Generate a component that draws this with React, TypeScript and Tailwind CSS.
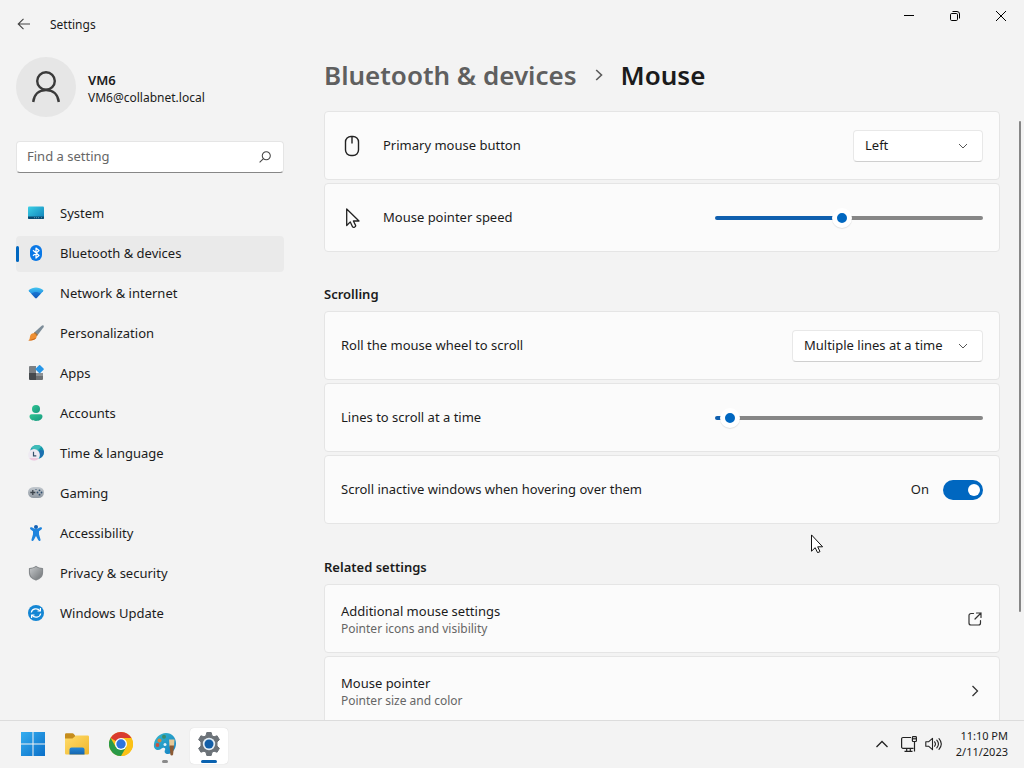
import { useState, type CSSProperties, type ReactNode } from 'react';

const glyph = 'size-4 shrink-0';

function SystemIcon() {
  return (
    <svg viewBox="0 0 16 16" className={glyph} aria-hidden="true">
      <defs>
        <linearGradient id="sys" x1="0" y1="0" x2="1" y2="1">
          <stop offset="0" stopColor="#3bd0e6" />
          <stop offset="1" stopColor="#0e7fb8" />
        </linearGradient>
      </defs>
      <rect x="0" y="1.5" width="16" height="12.5" rx="1" fill="url(#sys)" />
      <path d="M0 11.500h16V13a1 1 0 0 1-1 1H1a1 1 0 0 1-1-1z" fill="#0a4a70" />
      <path d="M6 12.700h1M8 12.700h1M10 12.700h1M13 12.700h1" stroke="#8fd0e8" strokeWidth=".6" />
    </svg>
  );
}

function BluetoothIcon() {
  return (
    <svg viewBox="0 0 16 16" className={glyph} aria-hidden="true">
      <rect x="2" y="0" width="12" height="16" rx="6" fill="#0a78e6" />
      <path d="M5 5.200l6 5.300L8 13V3l3 2.500-6 5.300" fill="none" stroke="#fff" strokeWidth="1.200" strokeLinejoin="round" />
    </svg>
  );
}

function NetworkIcon() {
  return (
    <svg viewBox="0 0 16 16" className={glyph} aria-hidden="true">
      <defs>
        <linearGradient id="net" x1="0" y1="0" x2="0" y2="1">
          <stop offset="0" stopColor="#45c6f0" />
          <stop offset=".45" stopColor="#2a9ce6" />
          <stop offset="1" stopColor="#0b4aa8" />
        </linearGradient>
      </defs>
      <path d="M.9 5C4.800 1.600 11.200 1.600 15.100 5a.9.900 0 0 1 0 1.200L8.700 13a1 1 0 0 1-1.400 0L.9 6.200A.9.900 0 0 1 .9 5z" fill="url(#net)" />
      <path d="M3.400 8.800C6.200 6.500 9.800 6.500 12.600 8.800L8.700 13a1 1 0 0 1-1.400 0z" fill="#1261c4" opacity=".65" />
    </svg>
  );
}

function BrushIcon() {
  return (
    <svg viewBox="0 0 16 16" className={glyph} aria-hidden="true">
      <path d="M15.500.5c.5.500.4 1.200 0 1.800L9.300 10.500 6.200 7.600 13.700.7c.6-.5 1.300-.7 1.800-.2z" fill="#7c8c98" />
      <path d="M6.900 7l3 2.800-1.300 1.600-3.200-3z" fill="#a8743c" />
      <path d="M5.400 8.300c1.700.1 3.300 1.600 3.200 3.200-.2 2.800-3.200 4.400-8.300 3.900C2.300 14 1.500 12.500 2.200 10.700c.5-1.500 1.700-2.500 3.200-2.400z" fill="#ee8f33" />
      <path d="M.3 15.400c3.700.3 6.800-.6 7.900-2.700-2.500 1-5 1.900-7.900 2.700z" fill="#c8661a" />
    </svg>
  );
}

function AppsIcon() {
  return (
    <svg viewBox="0 0 16 16" className={glyph} aria-hidden="true">
      <path d="M1 2a1 1 0 0 1 1-1h6v7H1z" fill="#7b7f83" />
      <path d="M1 8h7v7H2a1 1 0 0 1-1-1z" fill="#45494d" />
      <path d="M8 8h7v6a1 1 0 0 1-1 1H8z" fill="#6c7073" />
      <path d="M8 8h7v3H8z" fill="#8d9194" />
      <rect x="8.500" y="1" width="6.300" height="6.300" rx=".8" transform="rotate(45 11.650 4.150)" fill="#2596e8" />
    </svg>
  );
}

function AccountsIcon() {
  return (
    <svg viewBox="0 0 16 16" className={glyph} aria-hidden="true">
      <defs>
        <linearGradient id="acc" x1="0" y1="0" x2="1" y2="1">
          <stop offset="0" stopColor="#2fc592" />
          <stop offset="1" stopColor="#17977f" />
        </linearGradient>
      </defs>
      <circle cx="8" cy="4" r="4" fill="url(#acc)" />
      <path d="M3.500 9.300h9a2 2 0 0 1 2 2c0 3-3 4.700-6.500 4.700s-6.500-1.700-6.500-4.700a2 2 0 0 1 2-2z" fill="url(#acc)" />
    </svg>
  );
}

function TimeIcon() {
  return (
    <svg viewBox="0 0 16 16" className={glyph} aria-hidden="true">
      <circle cx="9" cy="7" r="7" fill="#1597ab" />
      <path d="M3.500 2.700C6-.5 11-.8 13.500 1.800L10 5H6z" fill="#3fbcb8" />
      <path d="M12 5l3.800.5c.5 3-1 6-3.500 7.600L10 9z" fill="#1c6fb0" />
      <circle cx="6" cy="10" r="5.900" fill="#eeeaf2" />
      <path d="M1.200 13a5.900 5.900 0 0 0 9.700 0z" fill="#efc7dc" />
      <path d="M5.500 6.800v4h2.800" fill="none" stroke="#35506b" strokeWidth="1.200" />
    </svg>
  );
}

function GamingIcon() {
  return (
    <svg viewBox="0 0 16 16" className={glyph} aria-hidden="true">
      <defs>
        <linearGradient id="gam" x1="0" y1="0" x2="0" y2="1">
          <stop offset="0" stopColor="#c3c9cf" />
          <stop offset="1" stopColor="#8f98a1" />
        </linearGradient>
      </defs>
      <rect x="0" y="2" width="16" height="11" rx="5.500" fill="url(#gam)" />
      <path d="M4.800 5v5M2.300 7.500h5" stroke="#3c444c" strokeWidth="1.300" />
      <g fill="#2f4d6c">
        <circle cx="11.500" cy="5.300" r=".9" />
        <circle cx="11.500" cy="9.700" r=".9" />
        <circle cx="9.500" cy="7.500" r=".9" />
        <circle cx="13.500" cy="7.500" r=".9" />
        <circle cx="8" cy="4.500" r=".6" />
      </g>
    </svg>
  );
}

function AccessibilityIcon() {
  return (
    <svg viewBox="0 0 16 16" className={glyph} aria-hidden="true">
      <circle cx="8" cy="2" r="2" fill="#1460b4" />
      <path d="M2.300 2.500c.5-.5 1.300-.4 2 .1C6.500 4.500 9.500 4.500 11.700 2.600c.7-.5 1.500-.6 2-.1.500.6.400 1.400-.3 1.900L11 6.300v3l1.500 5.200c.2.800-.2 1.400-.8 1.500-.7.100-1.200-.2-1.500-.9L8 11l-2.200 4.100c-.3.700-.8 1-1.500.9-.6-.1-1-.7-.8-1.500L5 9.300v-3L2.600 4.400c-.7-.5-.8-1.300-.3-1.900z" fill="#1e84de" />
    </svg>
  );
}

function ShieldIcon() {
  return (
    <svg viewBox="0 0 16 16" className={glyph} aria-hidden="true">
      <defs>
        <linearGradient id="shi" x1="0" y1="0" x2="1" y2="1">
          <stop offset="0" stopColor="#c4c7c9" />
          <stop offset="1" stopColor="#707477" />
        </linearGradient>
      </defs>
      <path d="M8 .8c2 1.500 4.300 2.100 6.600 2.200.3 0 .5.200.5.500v4c0 4-2.600 6.500-6.800 7.900a1 1 0 0 1-.6 0C3.500 14 .9 11.500.9 7.500v-4c0-.3.200-.5.500-.5C3.700 2.900 6 2.300 8 .8z" fill="#85898c" />
      <path d="M8 2c1.800 1.200 3.900 1.800 6 2v3.500c0 3.500-2.200 5.600-6 6.900-3.800-1.300-6-3.400-6-6.900V4c2.100-.2 4.200-.8 6-2z" fill="url(#shi)" />
    </svg>
  );
}

function UpdateIcon() {
  return (
    <svg viewBox="0 0 16 16" className={glyph} aria-hidden="true">
      <circle cx="8" cy="8" r="8" fill="#1486d4" />
      <g fill="none" stroke="#fff" strokeWidth="1.200">
        <path d="M3.300 7.500C4 3.500 9.500 2.500 12 5.800M12.700 8.500C12 12.500 6.500 13.500 4 10.200" />
        <path d="M12.400 3v3H9.500M3.600 13v-3h2.900" />
      </g>
    </svg>
  );
}

const navItems: { label: string; icon: ReactNode; active?: boolean }[] = [
  { label: 'System', icon: <SystemIcon /> },
  { label: 'Bluetooth & devices', icon: <BluetoothIcon />, active: true },
  { label: 'Network & internet', icon: <NetworkIcon /> },
  { label: 'Personalization', icon: <BrushIcon /> },
  { label: 'Apps', icon: <AppsIcon /> },
  { label: 'Accounts', icon: <AccountsIcon /> },
  { label: 'Time & language', icon: <TimeIcon /> },
  { label: 'Gaming', icon: <GamingIcon /> },
  { label: 'Accessibility', icon: <AccessibilityIcon /> },
  { label: 'Privacy & security', icon: <ShieldIcon /> },
  { label: 'Windows Update', icon: <UpdateIcon /> },
];

function TitleBar() {
  const button = 'flex h-8 w-[46px] items-center justify-center hover:bg-black/5';
  return (
    <header className="flex h-12 shrink-0 items-start justify-between">
      <div className="flex h-12 items-center gap-4 pl-4 text-xs">
        <button type="button" aria-label="Back" className="flex size-4 items-center justify-center">
          <svg viewBox="0 0 16 16" className="size-4" fill="none" stroke="#444" strokeWidth="1.100" aria-hidden="true">
            <path d="M14 8H2.300M7.500 2.800L2.200 8l5.300 5.200" />
          </svg>
        </button>
        <span className="pt-0.5 pl-0.5">Settings</span>
      </div>
      <div className="flex">
        <button type="button" aria-label="Minimize" className={button}>
          <svg viewBox="0 0 10 10" className="size-2.5" stroke="#000" fill="none" aria-hidden="true">
            <path d="M0 4.500h10" />
          </svg>
        </button>
        <button type="button" aria-label="Restore" className={button}>
          <svg viewBox="0 0 10 10" className="size-2.5" stroke="#000" fill="none" aria-hidden="true">
            <rect x=".5" y="2.500" width="7" height="7" rx="1.200" />
            <path d="M2.500.5H7A2.500 2.500 0 0 1 9.500 3v4.500" />
          </svg>
        </button>
        <button type="button" aria-label="Close" className={button}>
          <svg viewBox="0 0 10 10" className="size-2.5" stroke="#000" fill="none" aria-hidden="true">
            <path d="M0 0l10 10M10 0L0 10" />
          </svg>
        </button>
      </div>
    </header>
  );
}

function Sidebar() {
  return (
    <aside className="flex w-[300px] shrink-0 flex-col px-4 pt-[9px]">
      <div className="flex items-center gap-3">
        <div className="flex size-[60px] items-center justify-center rounded-full bg-[#e6e6e6]">
          <svg viewBox="0 0 28 32" className="h-8 w-7" fill="none" stroke="#3a3a3a" strokeWidth="2.400" aria-hidden="true">
            <circle cx="14" cy="10" r="8.800" />
            <path d="M1.200 31C2 23.500 7 19 14 19s12 4.500 12.800 12" />
          </svg>
        </div>
        <div className="pt-1">
          <p className="text-[13px] leading-[18px] font-semibold">VM6</p>
          <p className="text-xs leading-[18px]">VM6@collabnet.local</p>
        </div>
      </div>
      <label className="mt-6 flex h-8 items-center rounded border border-[#e5e5e5] border-b-[#868686] bg-white px-2.5">
        <input
          type="text"
          aria-label="Find a setting"
          placeholder="Find a setting"
          className="min-w-0 flex-1 bg-transparent text-[13px] outline-none placeholder:text-[#666]"
        />
        <svg viewBox="0 0 14 14" className="mr-0.5 size-3" fill="none" stroke="#444" strokeWidth="1.200" aria-hidden="true">
          <circle cx="8.500" cy="5.500" r="4.700" />
          <path d="M5.200 8.800L.7 13.300" />
        </svg>
      </label>
      <nav aria-label="Settings" className="mt-[23px] flex flex-col gap-1">
        {navItems.map((item) => (
          <a
            key={item.label}
            href="#"
            aria-current={item.active ? 'page' : undefined}
            className={
              item.active
                ? 'flex h-9 items-center rounded bg-[#eaeaea] text-[13px]'
                : 'flex h-9 items-center rounded text-[13px] hover:bg-[#eaeaea]'
            }
          >
            <span className={item.active ? 'h-4 w-[3px] rounded-full bg-[#0067c0]' : 'h-4 w-[3px]'} />
            <span className="flex w-[41px] items-center pb-0.5 pl-[9px]">{item.icon}</span>
            {item.label}
          </a>
        ))}
      </nav>
    </aside>
  );
}

function Card({ children }: { children: ReactNode }) {
  return (
    <div className="flex min-h-[69px] items-center justify-between gap-4 rounded border border-[#e5e5e5] bg-[#fbfbfb] px-4 py-2">
      {children}
    </div>
  );
}

function Dropdown({ id, options, wide }: { id: string; options: string[]; wide?: boolean }) {
  return (
    <span className={wide ? 'relative w-[191px]' : 'relative w-[130px]'}>
      <select
        id={id}
        className="block h-8 w-full appearance-none rounded border border-[#e8e8e8] border-b-[#cfcfcf] bg-white pr-8 pl-[11px] text-[13px]"
      >
        {options.map((o) => (
          <option key={o}>{o}</option>
        ))}
      </select>
      <svg viewBox="0 0 8 8" className="pointer-events-none absolute top-3 right-4 size-2" fill="none" stroke="#555" aria-hidden="true">
        <path d="M0 2l4 4 4-4" />
      </svg>
    </span>
  );
}

function Slider({ id, min, max, initial }: { id: string; min: number; max: number; initial: number }) {
  const [value, setValue] = useState(initial);
  const ratio = (value - min) / (max - min);
  const fill = { '--fill': `calc(10px + (100% - 20px) * ${ratio})` } as CSSProperties;
  return (
    <input
      id={id}
      type="range"
      min={min}
      max={max}
      value={value}
      onChange={(e) => setValue(Number(e.target.value))}
      style={fill}
      className="h-5 w-[268px] appearance-none bg-transparent [&::-webkit-slider-runnable-track]:h-1 [&::-webkit-slider-runnable-track]:rounded-full [&::-webkit-slider-runnable-track]:bg-[linear-gradient(to_right,#0f5fae_var(--fill),#868686_var(--fill))] [&::-webkit-slider-thumb]:-mt-2 [&::-webkit-slider-thumb]:size-5 [&::-webkit-slider-thumb]:appearance-none [&::-webkit-slider-thumb]:rounded-full [&::-webkit-slider-thumb]:border-5 [&::-webkit-slider-thumb]:border-white [&::-webkit-slider-thumb]:bg-[#0067c0] [&::-webkit-slider-thumb]:shadow-[0_1px_1px_#0000001a]"
    />
  );
}

function Content() {
  return (
    <main className="flex min-w-0 flex-1 flex-col pl-6">
      <h1 className="flex h-[63px] shrink-0 items-center pb-2.5 text-[26px] leading-9 font-semibold">
        <a href="#" className="text-[#5f5f5f]">
          Bluetooth &amp; devices
        </a>
        <svg viewBox="0 0 8 12" className="mx-[18px] h-3 w-2" fill="none" stroke="#5a5a5a" strokeWidth="1.600" aria-hidden="true">
          <path d="M1.200 1L6.500 6l-5.300 5" />
        </svg>
        Mouse
      </h1>
      <div className="flex min-h-0 flex-1">
        <div className="flex min-w-0 flex-1 flex-col overflow-y-auto [scrollbar-width:none]">
          <section className="flex flex-col gap-[3px]">
            <Card>
              <label htmlFor="primary" className="flex items-center gap-5 text-[13px]">
                <svg viewBox="0 0 20 24" className="mx-px h-6 w-5" fill="none" stroke="#222" strokeWidth="1.400" aria-hidden="true">
                  <rect x="3.500" y="2.500" width="13" height="19" rx="5.500" />
                  <path d="M10 2.500v7" />
                </svg>
                Primary mouse button
              </label>
              <Dropdown id="primary" options={['Left', 'Right']} />
            </Card>
            <Card>
              <label htmlFor="speed" className="flex items-center gap-5 text-[13px]">
                <svg viewBox="0 0 20 24" className="mx-px h-6 w-5" fill="none" stroke="#222" strokeWidth="1.300" strokeLinejoin="round" aria-hidden="true">
                  <path d="M4.700 3v16.500l3.600-3.600 2.300 5c.9 1 3.300 0 3.100-1.300l-2.300-4.600H17z" />
                </svg>
                Mouse pointer speed
              </label>
              <Slider id="speed" min={1} max={20} initial={10} />
            </Card>
          </section>
          <section className="flex flex-col gap-[3px]">
            <h2 className="pt-8 pb-1 text-[13px] leading-5 font-semibold">Scrolling</h2>
            <Card>
              <label htmlFor="wheel" className="text-[13px]">
                Roll the mouse wheel to scroll
              </label>
              <Dropdown id="wheel" wide options={['Multiple lines at a time', 'One screen at a time']} />
            </Card>
            <Card>
              <label htmlFor="lines" className="text-[13px]">
                Lines to scroll at a time
              </label>
              <Slider id="lines" min={1} max={100} initial={3} />
            </Card>
            <Card>
              <label htmlFor="inactive" className="text-[13px]">
                Scroll inactive windows when hovering over them
              </label>
              <span className="flex items-center gap-3.5 text-[13px]">
                On
                <input
                  id="inactive"
                  type="checkbox"
                  role="switch"
                  defaultChecked
                  className="flex h-5 w-10 appearance-none items-center rounded-full bg-[#868686] px-[3px] before:size-3 before:rounded-full before:bg-white checked:justify-end checked:bg-[#0067c0]"
                />
              </span>
            </Card>
          </section>
          <section className="mt-px flex flex-col gap-[3px]">
            <h2 className="pt-8 pb-1 text-[13px] leading-5 font-semibold">Related settings</h2>
            <a href="#" className="block">
              <Card>
                <span className="pt-0.5">
                  <span className="block text-[13px] leading-[18px]">Additional mouse settings</span>
                  <span className="block text-xs leading-[18px] text-[#666]">Pointer icons and visibility</span>
                </span>
                <svg viewBox="0 0 16 16" className="size-4" fill="none" stroke="#333" strokeWidth="1.200" strokeLinecap="round" aria-hidden="true">
                  <path d="M6.500 2.500H4A2 2 0 0 0 2 4.500V12a2 2 0 0 0 2 2h7.500a2 2 0 0 0 2-2V9.500M9.500 2H14v4.500M14 2L8 8" />
                </svg>
              </Card>
            </a>
            <a href="#" className="block">
              <Card>
                <span className="pt-0.5">
                  <span className="block text-[13px] leading-[18px]">Mouse pointer</span>
                  <span className="block text-xs leading-[18px] text-[#666]">Pointer size and color</span>
                </span>
                <svg viewBox="0 0 16 16" className="size-4" fill="none" stroke="#333" strokeWidth="1.300" aria-hidden="true">
                  <path d="M5.500 3l5 5-5 5" />
                </svg>
              </Card>
            </a>
          </section>
        </div>
        <div className="flex w-6 shrink-0 justify-end pt-2.5 pr-[3px]" aria-hidden="true">
          <div className="h-[82%] w-0.5 rounded-full bg-[#868686]" />
        </div>
      </div>
    </main>
  );
}

function Taskbar() {
  const tile = 'flex h-9 w-[38px] flex-col items-center rounded pt-1';
  return (
    <footer className="flex h-12 shrink-0 items-center justify-between border-t border-[#dcdcdc] bg-[#f3f3f3] pr-4 pl-3.5">
      <div className="flex items-center gap-1.5 pt-0.5">
        <button type="button" aria-label="Start" className={tile}>
          <svg viewBox="0 0 24 24" className="size-6" aria-hidden="true">
            <defs>
              <linearGradient id="win" x1="0" y1="0" x2="24" y2="24" gradientUnits="userSpaceOnUse">
                <stop offset="0" stopColor="#35aef0" />
                <stop offset="1" stopColor="#0a6fc8" />
              </linearGradient>
            </defs>
            <path d="M0 0h11.500v11.500H0zM12.500 0H24v11.500H12.500zM0 12.500h11.500V24H0zM12.500 12.500H24V24H12.500z" fill="url(#win)" />
          </svg>
        </button>
        <button type="button" aria-label="File Explorer" className={tile}>
          <svg viewBox="0 0 24 24" className="size-6" aria-hidden="true">
            <defs>
              <linearGradient id="fol" x1="0" y1="0" x2="1" y2="1">
                <stop offset="0" stopColor="#ffdc6a" />
                <stop offset="1" stopColor="#f0b62c" />
              </linearGradient>
              <linearGradient id="tray" x1="0" y1="0" x2="0" y2="1">
                <stop offset="0" stopColor="#2488d8" />
                <stop offset="1" stopColor="#1564ac" />
              </linearGradient>
            </defs>
            <path d="M0 2.500a1.300 1.300 0 0 1 1.300-1.300h6.200c.6 0 1 .3 1.300.7L11 4.500V10H0z" fill="#c58c1c" />
            <path d="M0 6.500h7.500L11 3.500h11.700A1.300 1.300 0 0 1 24 4.800v16.400a1.300 1.300 0 0 1-1.300 1.300H1.300A1.300 1.300 0 0 1 0 21.200z" fill="url(#fol)" />
            <path d="M4.500 22.500V17.500a2 2 0 0 1 2-2h11a2 2 0 0 1 2 2v5z" fill="url(#tray)" />
          </svg>
        </button>
        <button type="button" aria-label="Google Chrome" className={tile}>
          <svg viewBox="0 0 24 24" className="size-6" aria-hidden="true">
            <circle cx="12" cy="12" r="12" fill="#fbc116" />
            <path d="M12 12L1.600 6A12 12 0 0 1 22.400 6z" fill="#d93a2f" />
            <path d="M12 6h10.400A12 12 0 0 1 12 24l5.200-9z" fill="#fbc116" />
            <path d="M1.600 6A12 12 0 0 0 12 24l5.200-9L6.800 15z" fill="#2a9a48" />
            <circle cx="12" cy="12" r="6" fill="#fff" />
            <circle cx="12" cy="12" r="4.700" fill="#2f74dc" />
          </svg>
        </button>
        <button type="button" aria-label="Paint" className={tile}>
          <svg viewBox="0 0 24 24" className="size-6" aria-hidden="true">
            <defs>
              <linearGradient id="pal" x1="0" y1="0" x2="1" y2="1">
                <stop offset="0" stopColor="#35b8cc" />
                <stop offset="1" stopColor="#1580c4" />
              </linearGradient>
            </defs>
            <path d="M13 1c6 0 10 4.500 10 10.500 0 5.500-4 10.500-8 10.500-3 0-4-2-3-4 .8-1.500-.5-3-2.500-2C8 16.700 7.500 18 5 18c-3 0-4.500-2.500-4-6C1.800 6 7 1 13 1z" fill="url(#pal)" />
            <circle cx="11" cy="4.800" r="2" fill="#3c8c6c" />
            <circle cx="6.500" cy="8.500" r="2" fill="#d8843c" />
            <circle cx="4.500" cy="13" r="1.900" fill="#c8503c" />
            <circle cx="12" cy="12.500" r="1.500" fill="#e4f4fa" />
            <path d="M16 7.500h5.500l-.5 7h-4.500z" fill="#e4c898" />
            <path d="M16.500 13.500H21l-.9 9a1.400 1.400 0 0 1-2.700 0z" fill="#8c5a34" />
          </svg>
          <span className="mt-1 h-[3px] w-1.5 rounded-full bg-[#8a8a8a]" />
        </button>
        <button type="button" aria-label="Settings" className="flex h-9 w-[38px] flex-col items-center rounded bg-white pt-1 shadow-[0_0_1px_#00000030]">
          <svg viewBox="0 0 24 24" className="size-6" aria-hidden="true">
            <path
              d="M9.800.500h4.400l.8 3.200 2 1.100 3.100-1 2.300 3.900-2.400 2.200v4.200l2.400 2.200-2.300 3.900-3.100-1-2 1.100-.8 3.200H9.800L9 20.300l-2-1.100-3.100 1-2.300-3.900L4 14.100V9.900L1.600 7.700l2.300-3.900 3.100 1 2-1.100z"
              fill="#6c7278"
              stroke="#6c7278"
              strokeWidth="1"
              strokeLinejoin="round"
            />
            <circle cx="12" cy="12" r="6.200" fill="#e4eef6" />
            <circle cx="12" cy="12" r="4.500" fill="#125ea8" />
          </svg>
          <span className="mt-1 h-[3px] w-4 rounded-full bg-[#0a62b0]" />
        </button>
      </div>
      <div className="flex items-center pb-0.5">
        <button type="button" aria-label="Show hidden icons" className="mr-3">
          <svg viewBox="0 0 14 14" className="size-3.5" fill="none" stroke="#222" strokeWidth="1.300" aria-hidden="true">
            <path d="M1.500 10L7 4.500l5.500 5.500" />
          </svg>
        </button>
        <button type="button" aria-label="Network and volume" className="mr-3.5 flex items-center gap-2">
          <svg viewBox="0 0 16 16" className="size-4" fill="none" stroke="#222" strokeWidth="1.200" aria-hidden="true">
            <path d="M10 1.500H2A1.400 1.400 0 0 0 .6 2.900v8A1.400 1.400 0 0 0 2 12.300h10.500M3.500 15.300h8M5.700 12.300v3M9.300 12.300v3M13.500 5.500v10" />
            <rect x="11.400" y=".6" width="4" height="4.900" rx=".8" />
            <path d="M11.400 2.800h4" />
          </svg>
          <svg viewBox="0 0 17 16" className="h-4 w-[17px]" fill="none" stroke="#222" strokeWidth="1.100" strokeLinejoin="round" strokeLinecap="round" aria-hidden="true">
            <path d="M.8 5.800h2.700L7.500 2.300v11.400L3.500 10.200H.8zM9.600 5.800c1 1.300 1 3.100 0 4.400M11.800 4.200c2 2.300 2 5.300 0 7.600M14 2.700c2.800 3.200 2.800 7.400 0 10.600" />
          </svg>
        </button>
        <div className="text-right text-[11px] leading-4">
          <p>11:10 PM</p>
          <p>2/11/2023</p>
        </div>
      </div>
    </footer>
  );
}

export default function App() {
  return (
    <div className="relative flex h-screen flex-col overflow-hidden bg-[#f3f3f3] font-['Noto_Sans','Open_Sans',sans-serif] text-[#1b1b1b]">
      <TitleBar />
      <div className="flex min-h-0 flex-1">
        <Sidebar />
        <Content />
      </div>
      <Taskbar />
      <svg viewBox="0 0 12 19" className="pointer-events-none absolute top-[534px] left-[811px] h-[19px] w-3" aria-hidden="true">
        <path d="M.5.900v16.300l3.700-3.500 2.400 5 2.400-1.100-2.300-4.800h4.900z" fill="#fff" stroke="#111" strokeWidth="1" />
      </svg>
    </div>
  );
}
